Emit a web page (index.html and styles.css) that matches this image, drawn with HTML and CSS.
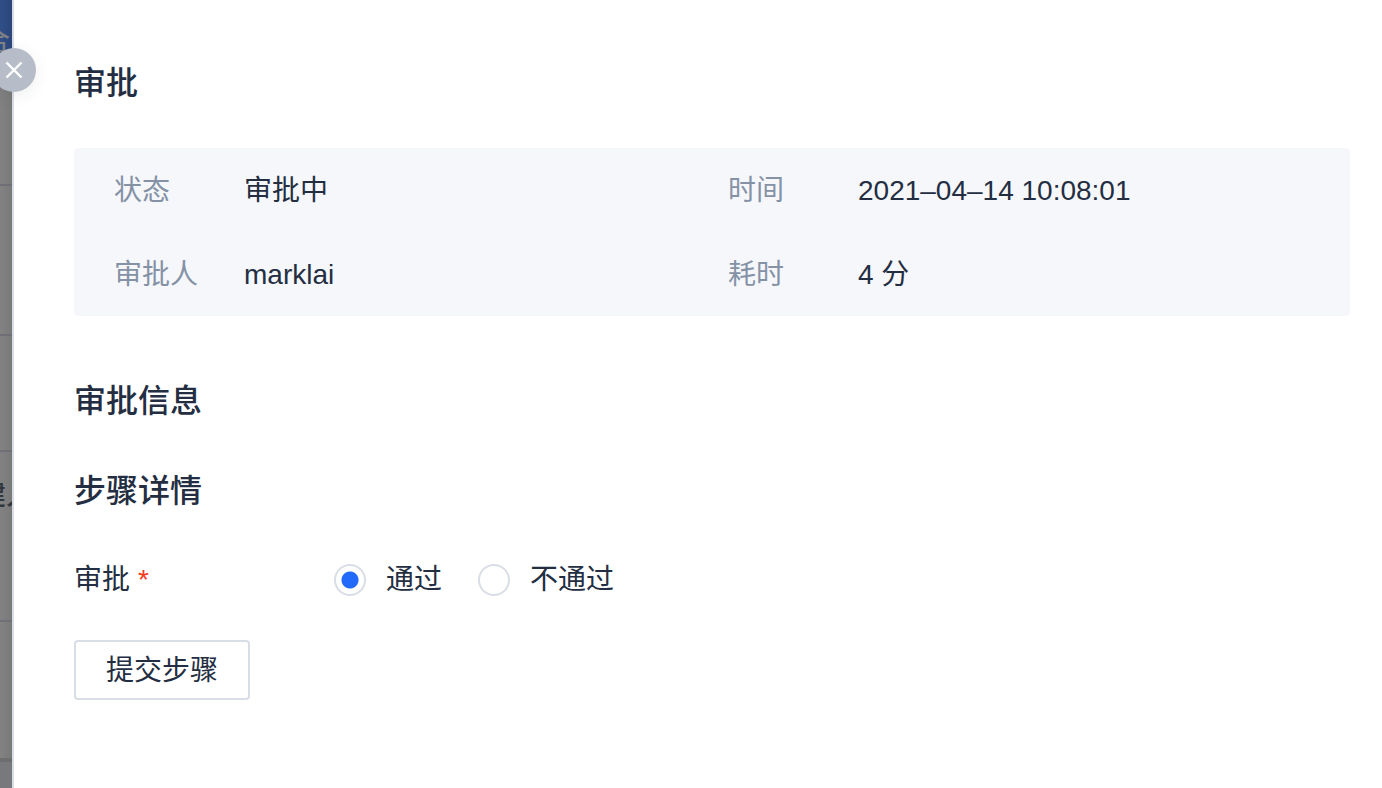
FILE: index.html
```html
<!DOCTYPE html>
<html lang="zh-CN">
<head>
<meta charset="utf-8">
<meta name="viewport" content="width=device-width, initial-scale=1">
<title>审批</title>
<link rel="stylesheet" href="styles.css">
</head>
<body>
<div class="page">
  <aside class="backdrop" aria-hidden="true">
    <div class="band band-nav"><span class="clip-nav">合</span></div>
    <div class="band band-a"></div>
    <div class="band band-b"></div>
    <div class="band band-c"></div>
    <div class="band band-d"><span class="clip-cell">创建人</span></div>
    <div class="band band-e"></div>
    <div class="band band-rest"></div>
  </aside>
  <main class="drawer">
    <button class="close" type="button" aria-label="关闭">
      <svg width="18" height="18" viewBox="0 0 18 18"><path d="M1.5 1.5L16.5 16.5M16.5 1.5L1.5 16.5" fill="none" stroke="#fff" stroke-width="2.4"/></svg>
    </button>
    <h1 class="title">审批</h1>
    <dl class="summary">
      <div class="item"><dt>状态</dt><dd>审批中</dd></div>
      <div class="item"><dt>时间</dt><dd>2021–04–14 10:08:01</dd></div>
      <div class="item"><dt>审批人</dt><dd>marklai</dd></div>
      <div class="item"><dt>耗时</dt><dd>4 分</dd></div>
    </dl>
    <h2 class="title">审批信息</h2>
    <h2 class="title title-steps">步骤详情</h2>
    <form class="form">
      <div class="field" role="radiogroup" aria-labelledby="decision">
        <div class="field-label" id="decision">审批<span class="required">*</span></div>
        <div class="options">
          <label class="option" for="pass"><input class="radio" type="radio" id="pass" name="decision" checked>通过</label>
          <label class="option" for="reject"><input class="radio" type="radio" id="reject" name="decision">不通过</label>
        </div>
      </div>
      <button class="submit" type="button">提交步骤</button>
    </form>
  </main>
</div>
</body>
</html>
```
FILE: styles.css
```css
* { box-sizing: border-box; }

body {
  margin: 0;
  background: #fff;
  color: #242e42;
  font-family: "Liberation Sans", "Noto Sans CJK SC", sans-serif;
  font-size: 28px;
  line-height: 40px;
}

.page { display: flex; min-height: 100vh; }

.backdrop {
  flex: 0 0 12px;
  display: flex;
  flex-direction: column;
  overflow: hidden;
  background: linear-gradient(to right, #828282, #797979);
}

.band { border-bottom: 2px solid #6f6f76; white-space: nowrap; }
.band-nav { height: 80px; padding-top: 22px; border: 0; background: linear-gradient(to right, #304f88, #2b477a); color: #808285; }
.band-a { height: 106px; }
.band-b { height: 150px; }
.band-c { height: 116px; }
.band-d { height: 170px; padding-top: 24px; color: #30363e; }
.band-e { height: 140px; border-bottom: 4px solid #6d6e70; }
.band-rest { flex: 1; border: 0; background: #77797c; }
.clip-nav { display: block; margin-left: -18px; }
.clip-cell { display: block; margin-left: -50px; font-weight: 500; }

.drawer {
  position: relative;
  flex: 1;
  min-width: 0;
  padding: 63px 32px 40px 60px;
  border-left: 2px solid #d9dde6;
}

.close {
  position: absolute;
  top: 48px;
  left: -22px;
  width: 44px;
  height: 44px;
  display: grid;
  place-items: center;
  padding: 0;
  border: 0;
  border-radius: 50%;
  background: #b6bdc9;
  box-shadow: 0 4px 16px rgba(36, 46, 66, 0.08);
}

.title { margin: 0; font-size: 32px; line-height: 40px; font-weight: 500; }

.summary {
  display: grid;
  grid-template-columns: 1fr 1fr;
  column-gap: 32px;
  margin: 45px 0 65px;
  padding: 0 40px;
  border-radius: 4px;
  background: #f5f7fb;
}

.item { display: flex; padding: 23px 0 21px; }
.item dt { flex: 0 0 130px; color: #8592a6; }
.item dd { margin: 0; }

.title-steps { margin-top: 50px; }

.form { margin-top: 49px; }
.field { display: flex; }
.field-label { flex: 0 0 260px; }
.required { margin-left: 8px; color: #f5391f; }
.options { display: flex; gap: 36px; }
.option { display: flex; align-items: center; gap: 20px; }

.radio {
  appearance: none;
  width: 32px;
  height: 32px;
  margin: 0;
  border: 2px solid #d9dde5;
  border-radius: 50%;
  background: #fff;
}
.radio:checked { background: radial-gradient(circle, #226bfa 8px, #fff 9px); }

.submit {
  margin-top: 40px;
  padding: 9px 30px 7px;
  border: 2px solid #d9dde5;
  border-radius: 4px;
  background: #fff;
  color: inherit;
  font: inherit;
}
```
